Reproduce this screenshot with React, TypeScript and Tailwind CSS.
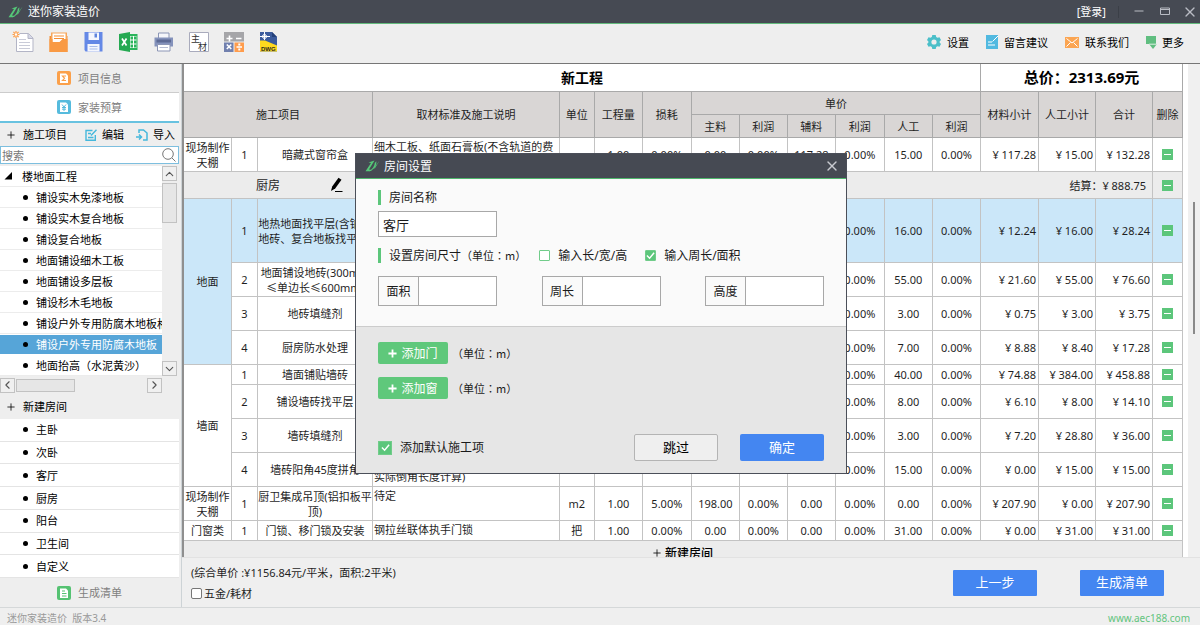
import React from "react";
import { ChevronDown, ChevronLeft, ChevronRight, ChevronUp, X } from "lucide-react";

type Item = {
  no: string;
  name: string;
  desc?: string;
  unit: string;
  qty: string;
  loss: string;
  price: string[];
  totals: string[];
  height: string;
  group?: string;
  groupRows?: number;
  active?: boolean;
};

const firstItem: Item = {
  no: "1", name: "暗藏式窗帘盒", desc: "细木工板、纸面石膏板(不含轨道的费\n用)", unit: "m", qty: "1.00", loss: "0.00%",
  price: ["0.00", "0.00%", "117.28", "0.00%", "15.00", "0.00%"], totals: ["117.28", "15.00", "132.28"],
  height: "h-[34px]", group: "现场制作\n天棚", groupRows: 1,
};

const items: Item[] = [
  { no: "1", name: "地热地面找平层(含铺设\n地砖、复合地板找平层)", unit: "m2", qty: "1.00", loss: "0.00%", price: ["0.00", "0.00%", "12.24", "0.00%", "16.00", "0.00%"], totals: ["12.24", "16.00", "28.24"], height: "h-[64px]", group: "地面", groupRows: 4, active: true },
  { no: "2", name: "地面铺设地砖(300mm\n≤单边长≤600mm)", unit: "m2", qty: "1.00", loss: "0.00%", price: ["0.00", "0.00%", "21.60", "0.00%", "55.00", "0.00%"], totals: ["21.60", "55.00", "76.60"], height: "h-[34px]" },
  { no: "3", name: "地砖填缝剂", unit: "m2", qty: "1.00", loss: "0.00%", price: ["0.00", "0.00%", "0.75", "0.00%", "3.00", "0.00%"], totals: ["0.75", "3.00", "3.75"], height: "h-[34px]" },
  { no: "4", name: "厨房防水处理", unit: "m2", qty: "1.20", loss: "0.00%", price: ["0.00", "0.00%", "7.40", "0.00%", "7.00", "0.00%"], totals: ["8.88", "8.40", "17.28"], height: "h-[34px]" },
  { no: "1", name: "墙面铺贴墙砖", unit: "m2", qty: "9.60", loss: "0.00%", price: ["0.00", "0.00%", "7.80", "0.00%", "40.00", "0.00%"], totals: ["74.88", "384.00", "458.88"], height: "h-[20px]", group: "墙面", groupRows: 4 },
  { no: "2", name: "铺设墙砖找平层", unit: "m2", qty: "1.00", loss: "0.00%", price: ["0.00", "0.00%", "6.10", "0.00%", "8.00", "0.00%"], totals: ["6.10", "8.00", "14.10"], height: "h-[34px]" },
  { no: "3", name: "墙砖填缝剂", unit: "m2", qty: "9.60", loss: "0.00%", price: ["0.00", "0.00%", "0.75", "0.00%", "3.00", "0.00%"], totals: ["7.20", "28.80", "36.00"], height: "h-[34px]" },
  { no: "4", name: "墙砖阳角45度拼角", desc: "墙砖阳角磨边拼角(按\n实际倒角长度计算)", unit: "m", qty: "1.00", loss: "0.00%", price: ["0.00", "0.00%", "0.00", "0.00%", "15.00", "0.00%"], totals: ["0.00", "15.00", "15.00"], height: "h-[34px]" },
  { no: "1", name: "厨卫集成吊顶(铝扣板平\n顶)", desc: "待定", unit: "m2", qty: "1.00", loss: "5.00%", price: ["198.00", "0.00%", "0.00", "0.00%", "0.00", "0.00%"], totals: ["207.90", "0.00", "207.90"], height: "h-[34px]", group: "现场制作\n天棚", groupRows: 1 },
  { no: "1", name: "门锁、移门锁及安装", desc: "钢拉丝联体执手门锁", unit: "把", qty: "1.00", loss: "0.00%", price: ["0.00", "0.00%", "0.00", "0.00%", "31.00", "0.00%"], totals: ["0.00", "31.00", "31.00"], height: "h-[20px]", group: "门窗类", groupRows: 1 },
];

const treeItems = [
  "铺设实木免漆地板",
  "铺设实木复合地板",
  "铺设复合地板",
  "地面铺设细木工板",
  "地面铺设多层板",
  "铺设杉木毛地板",
  "铺设户外专用防腐木地板格",
  "铺设户外专用防腐木地板",
  "地面抬高（水泥黄沙）",
];
const rooms = ["主卧", "次卧", "客厅", "厨房", "阳台", "卫生间", "自定义"];

function Logo() {
  return (
    <svg viewBox="0 0 15 12" className="h-3 w-[15px] shrink-0" fill="#55c878">
      <path d="M3.500 2.500 9.500.5 4 9.500l3 .4C5.500 11.300 3 11.500.5 11.300L6 3z" />
      <path d="M11.300 1.200c.4 4.800-2.300 8.800-7.300 10C7.500 9 9.600 6 9.800 3z" />
      <path d="M14.800.3 9.800 8.500l-.8-.6z" />
    </svg>
  );
}

function Plus({ className }: { className: string }) {
  return (
    <svg viewBox="0 0 10 10" className={className} fill="none" stroke="currentColor">
      <path d="M5 .5v9M.5 5h9" />
    </svg>
  );
}

function ToolButton({ label, children }: { label: string; children: React.ReactNode }) {
  return (
    <button type="button" aria-label={label} className="size-5">
      <svg viewBox="0 0 20 20" className="size-5 overflow-visible">{children}</svg>
    </button>
  );
}

function Toolbar() {
  return (
    <div className="flex h-10 shrink-0 items-center justify-between border-b border-[#767676] bg-[#eeeeee] pb-[3px] pl-3.5 pr-4">
      <div className="flex items-center gap-[15px]">
        <ToolButton label="新建">
          <path d="M2.500 1.500h12l4.500 4.500v13.500h-16.500z" fill="#fff" stroke="#b3b5c6" />
          <path d="M14 1.500v5h5" fill="#d5d7e6" stroke="#b3b5c6" />
          <path d="M5 7.500h7M5 10.500h11M5 13.500h11M5 16.500h11" stroke="#c9cbd8" />
          <circle cx="2" cy="2.500" r="3.600" fill="#eeeeee" />
          <path d="M2-1v7M-1.500 2.500h7M-.6-.1l5.200 5.200M4.600-.1-.6 5.100" stroke="#ff9d45" strokeWidth="1.200" />
          <circle cx="2" cy="2.500" r="1.200" fill="#fff" />
        </ToolButton>
        <ToolButton label="打开">
          <path d="M.5 4h18v16H.5z" fill="#f58e35" />
          <path d="M2 .5h16v9H2z" fill="#f7a65a" />
          <path d="M3.500 1.500h13v7l-3 1.500-2 2.500h-8z" fill="#fff" />
          <path d="M5 4h10M5 6.500h10" stroke="#f58e35" />
          <path d="M.5 7h3v3h7l3-3h5v13H.5z" fill="#f99a44" />
        </ToolButton>
        <ToolButton label="保存">
          <path d="M.5 0h18v19.500H1.500L.5 18z" fill="#6488e6" />
          <path d="M4.500.5h10.500v7.500H4.500zM3.500 12h12v7.500h-12z" fill="#f4f6fd" />
          <path d="M10.500 1.500h2.500v4h-2.500z" fill="#5f84dc" />
          <path d="M5.500 14.500h8M5.500 17h8" stroke="#a8bbea" />
        </ToolButton>
        <ToolButton label="导出表格">
          <path d="M10 2h8.500v16H10z" fill="#2ab45b" />
          <path d="M11 4h6.500v12H11z" fill="#fff" />
          <path d="M11.500 4.500h2.500v3h-2.500zM15 4.500h2.500v3H15zM11.500 8.500h2.500v3h-2.500zM15 8.500h2.500v3H15zM11.500 12.500h2.500v3h-2.500zM15 12.500h2.500v3H15z" fill="#2ab45b" />
          <path d="M0 2 11 0v20L0 18z" fill="#25a952" />
          <path d="m3 6.500 4.500 7M7.500 6.500 3 13.500" stroke="#fff" strokeWidth="1.700" />
        </ToolButton>
        <ToolButton label="打印">
          <path d="M4.500 1h10.500v6H4.500z" fill="#f5f6fa" stroke="#8b95b5" />
          <path d="M.5 5.500h18.500v9H.5z" fill="#8492bb" />
          <path d="M2.500 7.500h14.500v3H2.500z" fill="#5d6a94" />
          <path d="M3.500 12.500h12.500v6.500H3.500z" fill="#fff" stroke="#8b95b5" />
          <path d="M5.500 15.500h8.500" stroke="#b7bed3" />
        </ToolButton>
        <ToolButton label="主材">
          <path d="M.5.500h19v19H.5z" fill="#fff" stroke="#a9abbc" />
          <text x="2" y="9.500" fontSize="9" fill="#333" fontFamily="Noto Sans CJK SC">主</text>
          <text x="9" y="17.500" fontSize="9" fill="#333" fontFamily="Noto Sans CJK SC">材</text>
        </ToolButton>
        <ToolButton label="计算">
          <path d="M0 0h20v9.500H0z" fill="#a5a5a8" />
          <path d="M0 10.500h9.500V20H0z" fill="#7180ae" />
          <path d="M10.500 10.500H20V20h-9.500z" fill="#ff9c4c" />
          <path d="M5.500 3.500v6M2.500 6.500h6M12 6.500h5.500M12.500 15h5.500M2.800 12.500l4.500 4.500M7.300 12.500 2.800 17" stroke="#fff" strokeWidth="1.600" />
          <path d="M14.300 11.500h2v2h-2zM14.300 16.500h2v2h-2z" fill="#fff" />
        </ToolButton>
        <ToolButton label="导出DWG">
          <path d="M1 0h12l5 5v14.500H1z" fill="#3b5b9c" />
          <path d="M13 0v5h5z" fill="#24417a" />
          <path d="M1 8.500 6 8.500 18 13.500v6H1z" fill="#ffd91f" />
          <circle cx="5.500" cy="4.500" r="2" fill="none" stroke="#fff" />
          <path d="M1 4.500h10M5.500 0v8" stroke="#fff" />
          <text x="2" y="18.500" fontSize="6" fontWeight="700" fill="#2a2a20" fontFamily="Liberation Sans">DWG</text>
        </ToolButton>
      </div>
      <div className="flex items-center gap-[17px] text-black">
        <button type="button" className="flex items-center gap-1.5">
          <svg viewBox="0 0 14 14" className="size-3.5">
            <path d="M5.300 0h3.400l.5 2 1.300.800 2-.6L14 5l-1.400 1.400v1.200L14 9l-1.500 2.800-2-.6-1.300.8-.5 2H5.300l-.5-2-1.300-.8-2 .6L0 9l1.400-1.400V6.400L0 5l1.500-2.800 2 .6L4.800 2z" fill="#4bbfc9" />
            <circle cx="7" cy="7" r="2.600" fill="#eee" />
          </svg>
          设置
        </button>
        <button type="button" className="flex items-center gap-1.5">
          <svg viewBox="0 0 12 14" className="h-3.5 w-3">
            <path d="M0 0h12v14H0z" fill="#51b9e0" />
            <path d="M2 7h4M2 10h7M6.500 6.500 12 1" stroke="#fff" />
          </svg>
          留言建议
        </button>
        <button type="button" className="flex items-center gap-1.5">
          <svg viewBox="0 0 14 11" className="h-[11px] w-3.5">
            <path d="M0 0h14v11H0z" fill="#fba552" />
            <path d="m1.500 1.500 5.500 4.500 5.500-4.500M1.500 9.500l4-4M12.500 9.500l-4-4" stroke="#fff" fill="none" />
          </svg>
          联系我们
        </button>
        <button type="button" className="flex items-center gap-[5px]">
          <svg viewBox="0 0 11 13" className="h-[13px] w-[11px]">
            <path d="M0 0h10v8H0z" fill="#60be80" />
            <path d="M3 8h8l-4 5z" fill="#60be80" />
            <path d="M3 8.200h8" stroke="#dff1e5" />
          </svg>
          更多
        </button>
      </div>
    </div>
  );
}

function ScrollButton({ label, children }: { label: string; children: React.ReactNode }) {
  return (
    <button type="button" aria-label={label} className="flex size-[15px] shrink-0 items-center justify-center border border-[#c2c2c2] bg-[#f0f0f0] text-[#555]">
      {children}
    </button>
  );
}

function Dot() {
  return <span className="size-[5px] shrink-0 rounded-full bg-black" />;
}

function Sidebar() {
  return (
    <aside className="flex w-[182px] shrink-0 flex-col border-r border-[#cdd3d6] bg-[#eeeeee] pr-0.5 text-black">
      <button type="button" className="flex h-[29px] shrink-0 items-center justify-center gap-[7px] border-b border-[#cccccc] text-[#808080]">
        <svg viewBox="0 0 14 14" className="size-3.5">
          <rect width="14" height="14" rx="2" fill="#fba04a" />
          <path d="M3 2.500h6l2 2V12H3z" fill="#fff" />
          <path d="M9 5H5.500L7.500 7.300 5.500 9.500H9" stroke="#fba04a" strokeWidth="1.200" fill="none" />
        </svg>
        项目信息
      </button>
      <button type="button" className="flex h-[30px] shrink-0 items-center justify-center gap-[7px] border-b-2 border-[#68c2e0] bg-white text-[#808080]">
        <svg viewBox="0 0 14 14" className="size-3.5">
          <rect width="14" height="14" rx="2" fill="#56bbdd" />
          <path d="M3 2.500h6l2 2V12H3z" fill="#fff" />
          <path d="m5 4.500 2 2.500 2-2.500M7 7v4M5 7.500h4M5 9.200h4" stroke="#56bbdd" fill="none" />
        </svg>
        家装预算
      </button>
      <div className="flex h-[23px] shrink-0 items-center pl-[7px]">
        <button type="button" className="flex items-center gap-2"><Plus className="size-2" />施工项目</button>
        <button type="button" className="ml-[18px] flex items-center gap-[5px]">
          <svg viewBox="0 0 12 12" className="size-3" fill="none" stroke="#45b8dc" strokeWidth="1.400">
            <path d="M7.500 1.500H1v9.800h9.300V6M3 4.500h3M3 8.500h5.500M6 6.500l5.500-5.800" />
          </svg>
          编辑
        </button>
        <button type="button" className="ml-3 flex items-center gap-[5px]">
          <svg viewBox="0 0 12 12" className="size-3" fill="none" stroke="#45b8dc" strokeWidth="1.500">
            <path d="M3 4V1h4.500L11 4v7H7M0 8h5M3 5.500 5.500 8 3 10.500" />
          </svg>
          导入
        </button>
      </div>
      <div className="flex h-[18px] shrink-0 items-center border border-[#7dbfdf] bg-white pr-0.5">
        <input aria-label="搜索" placeholder="搜索" className="min-w-0 flex-1 bg-transparent pl-px outline-none placeholder:text-[#777]" />
        <svg viewBox="0 0 14 14" className="size-3.5" fill="none" stroke="#777">
          <circle cx="6" cy="6" r="5.300" />
          <path d="m10 10 3.500 3.500" />
        </svg>
      </div>
      <div className="flex shrink-0 pr-0.5 pt-0.5">
        <ul className="min-w-0 flex-1 overflow-hidden bg-white">
          <li className="flex h-[21px] items-center gap-[10px] border-b border-[#ececec] pl-1">
            <svg viewBox="0 0 8 8" className="size-2"><path d="M8 0v7.500H.5z" /></svg>
            楼地面工程
          </li>
          {treeItems.map((name, i) => (
            <li
              key={name}
              className={
                i === 7
                  ? "flex h-[21px] items-center gap-2 whitespace-nowrap border-y border-white bg-[#56a5d8] pl-[23px] text-white"
                  : "flex h-[21px] items-center gap-2 whitespace-nowrap border-b border-[#ececec] pl-[23px]"
              }
            >
              <Dot />
              {name}
            </li>
          ))}
        </ul>
        <div className="flex w-[15px] flex-col justify-between">
          <div>
            <ScrollButton label="向上滚动"><ChevronUp size={14} /></ScrollButton>
            <div className="mt-0.5 h-10 border border-[#c2c2c2] bg-[#e6e6e6]" />
          </div>
          <ScrollButton label="向下滚动"><ChevronDown size={14} /></ScrollButton>
        </div>
      </div>
      <div className="flex h-[18px] shrink-0 items-center gap-px pr-[17px]">
        <ScrollButton label="向左滚动"><ChevronLeft size={14} /></ScrollButton>
        <div className="h-[13px] w-[59px] border border-[#c2c2c2] bg-[#e6e6e6]" />
        <div className="ml-auto"><ScrollButton label="向右滚动"><ChevronRight size={14} /></ScrollButton></div>
      </div>
      <button type="button" className="flex h-[25px] shrink-0 items-center gap-2 pl-[7px]"><Plus className="size-2" />新建房间</button>
      <ul className="flex min-h-0 flex-1 flex-col bg-white">
        {rooms.map((room) => (
          <li key={room} className="flex flex-1 items-center gap-2 border-b border-[#e4e4e4] pl-[23px]">
            <Dot />
            {room}
          </li>
        ))}
      </ul>
      <button type="button" className="flex h-[29px] shrink-0 items-center justify-center gap-[7px] text-[#808080]">
        <svg viewBox="0 0 14 14" className="size-3.5">
          <rect width="14" height="14" rx="2" fill="#55c272" />
          <path d="M3 2.500h6l2 2V12H3z" fill="#fff" />
          <path d="M5 5h3M5 7.500h4.500M5 10h4.500" stroke="#55c272" />
        </svg>
        生成清单
      </button>
    </aside>
  );
}

function DeleteButton() {
  return (
    <button type="button" aria-label="删除" className="mx-auto flex size-[11px] items-center justify-center bg-[#5cc67b]">
      <span className="h-px w-[7px] bg-white" />
    </button>
  );
}

const cell = "border-b border-r border-[#c3c3c3] p-0 text-center";
const headCell = "border-b border-r border-[#a9a9a9] p-0 text-center font-normal";

function ItemRow({ item }: { item: Item }) {
  const tone = item.active ? "bg-[#cbe7f9]" : "bg-white";
  return (
    <tr className={item.height}>
      {item.group && (
        <td rowSpan={item.groupRows} className={`${cell} ${item.group === "地面" ? "bg-[#cbe7f9]" : "bg-white"} whitespace-pre`}>{item.group}</td>
      )}
      <td className={`${cell} ${tone}`}>{item.no}</td>
      <td className={`${cell} ${tone} overflow-hidden whitespace-pre`}>{item.name}</td>
      <td className="overflow-hidden whitespace-pre border-b border-r border-[#c3c3c3] bg-white p-0 pl-px pt-px text-left align-top">{item.desc}</td>
      <td className={`${cell} ${tone}`}>{item.unit}</td>
      <td className={`${cell} ${tone}`}>{item.qty}</td>
      <td className={`${cell} ${tone}`}>{item.loss}</td>
      {item.price.map((p, i) => (
        <td key={i} className={`${cell} ${tone}`}>{p}</td>
      ))}
      {item.totals.map((t, i) => (
        <td key={i} className={`border-b border-r border-[#c3c3c3] p-0 pr-0.5 text-right ${tone}`}>¥ {t}</td>
      ))}
      <td className={`${cell} ${tone}`}><DeleteButton /></td>
    </tr>
  );
}

function BudgetTable() {
  return (
    <table className="w-full table-fixed border-separate border-spacing-0">
      <colgroup>
        <col className="w-[48px]" />
        <col className="w-[26px]" />
        <col className="w-[115px]" />
        <col />
        <col className="w-[35px]" />
        <col className="w-[48px]" />
        <col className="w-[49px]" />
        <col className="w-[48px]" />
        <col className="w-[48px]" />
        <col className="w-[48px]" />
        <col className="w-[49px]" />
        <col className="w-[48px]" />
        <col className="w-[48px]" />
        <col className="w-[58px]" />
        <col className="w-[57px]" />
        <col className="w-[57px]" />
        <col className="w-[30px]" />
      </colgroup>
      <thead>
        <tr className="h-[28px] bg-white text-black">
          <th colSpan={13} className="border-b border-r border-[#a9a9a9] p-0 text-[14px] font-bold">新工程</th>
          <th colSpan={4} className="border-b border-r border-[#a9a9a9] p-0 text-[15px] font-bold">总价：2313.69元</th>
        </tr>
        <tr className="h-[23px] bg-[#d9d6d5]">
          <th rowSpan={2} colSpan={3} className={headCell}>施工项目</th>
          <th rowSpan={2} className={headCell}>取材标准及施工说明</th>
          <th rowSpan={2} className={headCell}>单位</th>
          <th rowSpan={2} className={headCell}>工程量</th>
          <th rowSpan={2} className={headCell}>损耗</th>
          <th colSpan={6} className={headCell}>单价</th>
          <th rowSpan={2} className={headCell}>材料小计</th>
          <th rowSpan={2} className={headCell}>人工小计</th>
          <th rowSpan={2} className={headCell}>合计</th>
          <th rowSpan={2} className={headCell}>删除</th>
        </tr>
        <tr className="h-[23px] bg-[#d9d6d5]">
          {["主料", "利润", "辅料", "利润", "人工", "利润"].map((h, i) => (
            <th key={i} className={headCell}>{h}</th>
          ))}
        </tr>
      </thead>
      <tbody>
        <ItemRow item={firstItem} />
        <tr className="h-[27px] bg-[#ececec]">
          <td colSpan={16} className="border-b border-r border-[#c3c3c3] p-0">
            <div className="flex items-center pl-[72px] pr-1.5">
              <span className="text-[12px]">厨房</span>
              <button type="button" aria-label="编辑房间" className="ml-[50px]">
                <svg viewBox="0 0 14 16" className="h-4 w-3.5">
                  <path d="m1 14 1.200-4.500L8.500.800l3 2L5.200 11.500z" />
                  <path d="M5 14.500h7.500" stroke="#000" />
                </svg>
              </button>
              <span className="ml-auto">结算：¥ 888.75</span>
            </div>
          </td>
          <td className={cell}><DeleteButton /></td>
        </tr>
        {items.map((item, i) => (
          <ItemRow key={i} item={item} />
        ))}
        <tr className="h-6 bg-[#ececec] text-black">
          <td colSpan={17} className="border-r border-[#c3c3c3] p-0">
            <button type="button" className="mx-auto flex items-center gap-1 text-[12px] leading-[15px] font-medium"><Plus className="size-2" />新建房间</button>
          </td>
        </tr>
      </tbody>
    </table>
  );
}

function GreenCheck({ label, size, checked }: { label: string; size: "sm" | "md"; checked?: boolean }) {
  return (
    <label className="flex items-center gap-2">
      <span className="grid place-items-center">
        <input
          type="checkbox"
          defaultChecked={checked}
          className={
            size === "sm"
              ? "peer col-start-1 row-start-1 size-[11px] appearance-none rounded-[1px] border border-[#71cc8a] bg-white checked:bg-[#5cc67b]"
              : "peer col-start-1 row-start-1 size-3.5 appearance-none border border-[#71cc8a] bg-white checked:bg-[#5cc67b]"
          }
        />
        <svg viewBox="0 0 10 10" className="pointer-events-none invisible col-start-1 row-start-1 size-[9px] peer-checked:visible" fill="none" stroke="#fff" strokeWidth="1.600">
          <path d="m1 5 3 3 5-6" />
        </svg>
      </span>
      {label}
    </label>
  );
}

function UnitNote() {
  return <span className="font-['Noto_Sans_CJK_TC',sans-serif] text-[11px]">（单位：m）</span>;
}

function SizeField({ label }: { label: string }) {
  return (
    <label className="flex h-[30px] w-[119px] border border-[#a8a8a8]">
      <span className="flex w-10 items-center justify-center border-r border-[#a8a8a8]">{label}</span>
      <input className="min-w-0 flex-1 bg-white px-1 outline-none" />
    </label>
  );
}

function RoomDialog() {
  return (
    <div className="pointer-events-none fixed inset-0 flex items-center justify-center pl-0.5 pt-0.5">
      <div role="dialog" aria-label="房间设置" className="pointer-events-auto w-[492px] border border-[#4b4f59] bg-[#fafafa] text-[12px] leading-[15px] text-[#1a1a1a]">
        <div className="flex h-[25px] items-center gap-1 border-b border-[#4fb76c] bg-[#464a53] pl-[9px] pr-1.5 text-white">
          <Logo />
          <span>房间设置</span>
          <button type="button" aria-label="关闭" className="ml-auto"><X size={16} color="#c8cad0" /></button>
        </div>
        <div className="px-[22px] pb-5 pt-[11px]">
          <label htmlFor="room-name" className="flex h-[15px] items-center border-l-[3px] border-[#5cc67b] pl-2">房间名称</label>
          <input id="room-name" defaultValue="客厅" className="mt-1.5 block h-[26px] w-[119px] border border-[#a8a8a8] bg-white pl-1 text-[13px] outline-none" />
          <div className="mt-[11px] flex h-[15px] items-center">
            <span className="flex h-[15px] items-center border-l-[3px] border-[#5cc67b] pl-2">设置房间尺寸<UnitNote /></span>
            <span className="ml-[13px]"><GreenCheck label="输入长/宽/高" size="sm" /></span>
            <span className="ml-[18px]"><GreenCheck label="输入周长/面积" size="sm" checked /></span>
          </div>
          <div className="mt-[13px] flex justify-between">
            <SizeField label="面积" />
            <SizeField label="周长" />
            <SizeField label="高度" />
          </div>
        </div>
        <div className="border-t border-[#cccccc] bg-[#e6e6e6] px-[22px] pb-3 pt-[15px]">
          <div className="flex items-center gap-1">
            <button type="button" className="flex h-[22px] w-[70px] items-center justify-center gap-1 rounded-[2px] bg-[#5fc87b] text-white"><Plus className="size-[9px] stroke-2" />添加门</button>
            <UnitNote />
          </div>
          <div className="mt-[13px] flex items-center gap-1">
            <button type="button" className="flex h-[22px] w-[70px] items-center justify-center gap-1 rounded-[2px] bg-[#5fc87b] text-white"><Plus className="size-[9px] stroke-2" />添加窗</button>
            <UnitNote />
          </div>
          <div className="mt-[35px] flex items-center">
            <GreenCheck label="添加默认施工项" size="md" checked />
            <button type="button" className="ml-auto h-[27px] w-[84px] rounded-[2px] border border-[#b4b4b4] bg-[#efefef] text-[13px] text-black">跳过</button>
            <button type="button" className="ml-[22px] h-[27px] w-[84px] rounded-[2px] bg-[#4486f1] text-[13px] text-white">确定</button>
          </div>
        </div>
      </div>
    </div>
  );
}

export default function App() {
  return (
    <div className="flex h-screen min-h-[625px] flex-col overflow-hidden bg-[#efefef] font-['Noto_Sans','Noto_Sans_CJK_SC',sans-serif] text-[11px] leading-[15px] text-[#1f1f1f]">
      <header className="flex h-6 shrink-0 items-center border-b border-[#62ba7c] bg-[#464a53] pl-2 pr-0.5 text-white">
        <Logo />
        <h1 className="ml-[5px] text-[12px]">迷你家装造价</h1>
        <a href="#login" className="ml-auto mr-3">[登录]</a>
        <span className="h-3 w-px bg-[#3b3f47]" />
        <button type="button" aria-label="最小化" className="ml-[15px]">
          <svg viewBox="0 0 10 10" className="size-2.5"><path d="M.5 4h9" stroke="#b9bcc4" /></svg>
        </button>
        <button type="button" aria-label="最大化" className="ml-4">
          <svg viewBox="0 0 10 10" className="size-2.5" fill="none" stroke="#b9bcc4"><path d="M.5 1h9v6.500h-9zM.5 2.500h9" /></svg>
        </button>
        <button type="button" aria-label="关闭" className="ml-3"><X size={16} color="#b9bcc4" /></button>
      </header>
      <Toolbar />
      <div className="flex min-h-0 flex-1">
        <Sidebar />
        <main className="flex min-w-0 flex-1 flex-col">
          <div className="flex min-h-0 flex-1 border-l-2 border-[#8f8f8f]">
            <div className="min-w-0 flex-1 overflow-hidden"><BudgetTable /></div>
            <div className="w-[5px] bg-white" />
            <div className="flex w-3 justify-center bg-[#f0f0f0] pt-[138px]">
              <div className="h-[132px] w-0.5 bg-[#8a8a8a]" />
            </div>
          </div>
          <div className="flex h-[50px] shrink-0 items-center border-t border-[#e2e2e2] pl-[9px] pr-9">
            <div className="flex flex-col gap-1.5">
              <p>(综合单价 :¥1156.84元/平米，面积:2平米)</p>
              <label className="flex items-center gap-0.5">
                <input type="checkbox" className="size-[11px] appearance-none rounded-[2px] border border-[#777] bg-white" />
                五金/耗材
              </label>
            </div>
            <button type="button" className="ml-auto h-[26px] w-[84px] rounded-[1px] bg-[#4486f1] text-[13px] text-white">上一步</button>
            <button type="button" className="ml-[43px] h-[26px] w-[84px] rounded-[1px] bg-[#4486f1] text-[13px] text-white">生成清单</button>
          </div>
        </main>
      </div>
      <footer className="flex h-[18px] shrink-0 items-end justify-between border-t border-[#d5d8d9] pl-[7px] pr-2.5 text-[10px] leading-[14px] text-[#999]">
        <span className="whitespace-pre">迷你家装造价  版本3.4</span>
        <a href="#site" className="text-[#62c47d]">www.aec188.com</a>
      </footer>
      <RoomDialog />
    </div>
  );
}
